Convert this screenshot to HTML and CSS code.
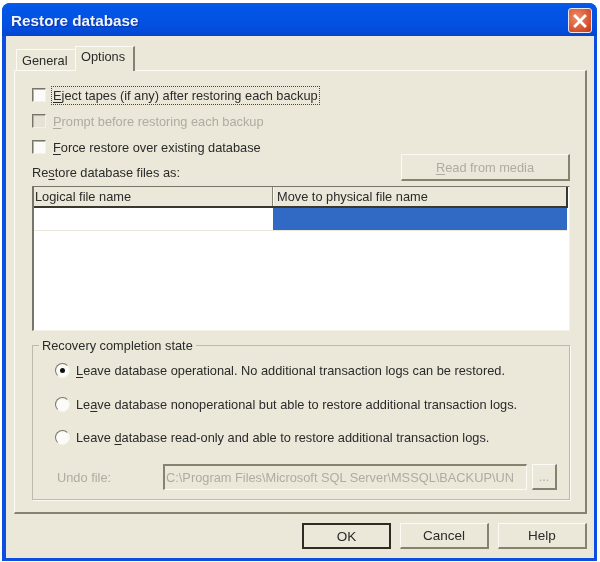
FILE: index.html
```html
<!DOCTYPE html>
<html lang="en">
<head>
<meta charset="utf-8">
<title>Restore database</title>
<link rel="stylesheet" href="styles.css">
</head>
<body>
<div class="window">
  <header class="titlebar">
    <span class="title">Restore database</span>
    <span class="close"><svg viewBox="0 0 22 22" width="18" height="18"><path d="M5 5L17 17M17 5L5 17" stroke="#fff" stroke-width="3.4" stroke-linecap="square"/></svg></span>
  </header>
  <div class="client">
    <div class="tabs">
      <span class="tab">General</span>
      <span class="tab active">Options</span>
    </div>
    <div class="panel">
      <label class="check"><span class="box"></span><span class="focus"><u>E</u>ject tapes (if any) after restoring each backup</span></label>
      <label class="check disabled"><span class="box"></span><span><u>P</u>rompt before restoring each backup</span></label>
      <label class="check"><span class="box"></span><span><u>F</u>orce restore over existing database</span></label>
      <div class="filesbar">
        <span class="fileslabel">Re<u>s</u>tore database files as:</span>
        <button class="btn media" disabled><u>R</u>ead from media</button>
      </div>
      <div class="grid">
        <div class="ghead">
          <span class="gcol1">Logical file name</span>
          <span class="gcol2">Move to physical file name</span>
        </div>
        <div class="grow">
          <span class="gcell1"></span>
          <span class="gcell2"></span>
        </div>
      </div>
      <fieldset class="group">
        <legend>Recovery completion state</legend>
        <label class="radio first"><span class="dot on"></span><span><u>L</u>eave database operational. No additional transaction logs can be restored.</span></label>
        <label class="radio second"><span class="dot"></span><span>Le<u>a</u>ve database nonoperational but able to restore additional transaction logs.</span></label>
        <label class="radio third"><span class="dot"></span><span>Leave <u>d</u>atabase read-only and able to restore additional transaction logs.</span></label>
        <div class="undo">
          <span class="undolabel">Undo file:</span>
          <span class="undoinput">C:\Program Files\Microsoft SQL Server\MSSQL\BACKUP\UN</span>
          <button class="btn browse" disabled>...</button>
        </div>
      </fieldset>
    </div>
    <div class="actions">
      <button class="btn action default">OK</button>
      <button class="btn action">Cancel</button>
      <button class="btn action">Help</button>
    </div>
  </div>
</div>
</body>
</html>
```
FILE: styles.css
```css
* { box-sizing: border-box; }
html, body { margin: 0; height: 100%; background: #fff; }
body {
  font-family: "Liberation Sans", Arial, sans-serif;
  font-size: 12.8px;
  color: #2a2a2a;
  padding: 3px 3px 1px 2px;
}
u { text-underline-offset: 2px; text-decoration-thickness: 1px; }
.window {
  height: 558px;
  display: flex;
  flex-direction: column;
  background: #0b4ee0;
  border-radius: 8px 8px 0 0;
  filter: blur(0.3px);
}
.titlebar {
  height: 33px;
  flex: none;
  display: flex;
  align-items: center;
  justify-content: space-between;
  padding: 2px 5px 0 9px;
  background: linear-gradient(#0a5be6 0, #0356e8 12%, #0350e0 70%, #0245cf 100%);
  border-radius: 8px 8px 0 0;
}
.title {
  font-size: 15.3px;
  font-weight: bold;
  color: #f0f4ff;
  text-shadow: 1px 1px 1px #0a2f9a;
}
.close {
  width: 24px;
  height: 25px;
  display: flex;
  align-items: center;
  justify-content: center;
  background: radial-gradient(circle at 35% 35%, #ee8a66, #d4502c 70%, #b83c1e);
  border: 1px solid #e8e8f0;
  border-radius: 3px;
}
.client {
  flex: 1;
  margin: 0 3px 3px 4px;
  background: #ebe8d9;
  padding: 10px 7px 0 8px;
  display: flex;
  flex-direction: column;
}
.tabs {
  height: 24px;
  flex: none;
  display: flex;
  align-items: flex-end;
  padding-left: 2px;
  position: relative;
  z-index: 1;
}
.tab {
  height: 21px;
  padding: 3px 5px 0 5px;
  width: 59px;
  background: #ebe8d9;
  border-top: 1px solid #fbfaf5;
  border-left: 1px solid #fbfaf5;
  white-space: nowrap;
}
.tab.active {
  height: 25px;
  margin-bottom: -1px;
  width: 60px;
  padding: 2px 0 0 5px;
  border-right: 2px solid #85826f;
}
.panel {
  height: 444px;
  flex: none;
  background: #ebe8d9;
  border-top: 1px solid #fbfaf5;
  border-left: 1px solid #fbfaf5;
  border-right: 2px solid #85826f;
  border-bottom: 2px solid #85826f;
  padding: 11px 15px 0 17px;
  display: flex;
  flex-direction: column;
}
.check {
  height: 26px;
  flex: none;
  display: flex;
  align-items: center;
  gap: 7px;
}
.box {
  width: 14px;
  height: 14px;
  flex: none;
  margin-left: 0;
  background: #fbfbf8;
  border-top: 1px solid #77756a;
  border-left: 1px solid #77756a;
  border-right: 1px solid #f4f2e8;
  border-bottom: 1px solid #f4f2e8;
  box-shadow: inset 1px 1px 0 #b5b2a4;
}
.focus { outline: 1px dotted #444; outline-offset: 1px; }
.disabled { color: #aeaca0; }
.disabled .box { background: #e6e3d5; }
.filesbar {
  height: 26px;
  flex: none;
  margin-top: -5px;
  margin-bottom: 5px;
  display: flex;
  align-items: flex-end;
  justify-content: space-between;
}
.fileslabel { margin-bottom: 1px; }
.btn {
  font: inherit;
  color: inherit;
  background: #ebe8d9;
  border-top: 1px solid #fbfaf5;
  border-left: 1px solid #fbfaf5;
  border-right: 2px solid #85826f;
  border-bottom: 2px solid #85826f;
  padding: 0;
}
.btn:disabled { color: #aeaca0; }
.media { width: 169px; height: 27px; }
.grid {
  height: 145px;
  flex: none;
  background: #fff;
  border-top: 1px solid #77756a;
  border-left: 2px solid #77756a;
  border-right: 1px solid #f4f2e8;
  border-bottom: 1px solid #f4f2e8;
}
.ghead {
  height: 21px;
  display: flex;
  background: #ebe8d9;
  border-bottom: 2px solid #3a382e;
  border-right: 2px solid #3a382e;
  margin-right: 1px;
  line-height: 19px;
}
.gcol1 { width: 239px; padding-left: 1px; border-right: 1px solid #85826f; }
.gcol2 { flex: 1; padding-left: 3px; border-left: 1px solid #fbfaf5; }
.grow {
  height: 23px;
  display: flex;
  margin-right: 2px;
  border-bottom: 1px solid #ebe8d9;
}
.gcell1 { width: 239px; background: #fff; }
.gcell2 { flex: 1; background: #316ac5; border-bottom: 0; }
.group {
  margin: 7px 0 0 0;
  padding: 0;
  height: 162px;
  flex: none;
  min-width: 0;
  border: 1px solid #bdbaa9;
  box-shadow: 1px 1px 0 #fbfaf5;
  position: relative;
}
.group legend {
  margin-left: 6px;
  padding: 0 3px;
  line-height: 15px;
}
.radio {
  position: relative;
  display: flex;
  align-items: center;
  gap: 6px;
  height: 20px;
  padding-left: 22px;
}
.first { margin-top: 7px; }
.second { margin-top: 14px; }
.third { margin-top: 13px; }
.dot {
  width: 15px;
  height: 15px;
  flex: none;
  border-radius: 50%;
  background: #fbfbf8;
  border: 1px solid;
  border-color: #77756a #f4f2e8 #f4f2e8 #77756a;
  display: flex;
  align-items: center;
  justify-content: center;
}
.dot.on::after {
  content: "";
  width: 5px;
  height: 5px;
  border-radius: 50%;
  background: #111;
}
.undo {
  display: flex;
  align-items: center;
  margin-top: 17px;
  padding-left: 24px;
  color: #aeaca0;
}
.undolabel { width: 106px; flex: none; }
.undoinput {
  width: 364px;
  height: 26px;
  flex: none;
  line-height: 23px;
  padding-left: 1px;
  overflow: hidden;
  white-space: nowrap;
  background: #ebe8d9;
  border-top: 2px solid #85826f;
  border-left: 2px solid #85826f;
  border-right: 1px solid #fbfaf5;
  border-bottom: 1px solid #fbfaf5;
}
.browse { width: 25px; height: 26px; margin-left: 5px; flex: none; }
.actions {
  display: flex;
  justify-content: flex-end;
  gap: 9px;
  margin-top: 9px;
}
.action { width: 89px; height: 26px; font-size: 13.5px; }
.default { border: 2px solid #2d2b22; }
```
